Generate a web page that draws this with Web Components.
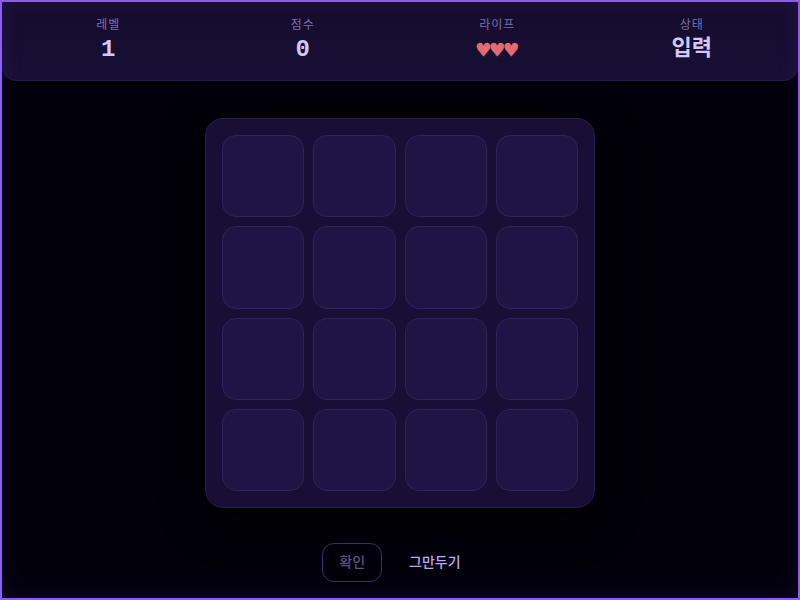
<!DOCTYPE html>
<html lang="ko">
<head>
<meta charset="utf-8">
<meta name="viewport" content="width=device-width, initial-scale=1">
<title>Memory Grid</title>
<style>
  html, body {
    margin: 0;
    min-height: 100%;
    background: #02010a;
  }
  body {
    font-family: "Liberation Sans", "Noto Sans CJK KR", sans-serif;
    color: #d4c8fa;
  }
</style>
</head>
<body>
<memory-game></memory-game>
<script>
class GameStat extends HTMLElement {
  constructor() {
    super();
    this.attachShadow({ mode: "open" }).innerHTML = `
      <style>
        :host {
          display: flex;
          flex-direction: column;
          align-items: center;
          gap: 2px;
        }
        .label {
          font-size: 12px;
          line-height: 16px;
          letter-spacing: 1px;
          color: #7d70ad;
        }
        .value {
          font: bold 22px/30px "Liberation Mono", "Noto Sans CJK KR", monospace;
          color: #d4c8fa;
        }
        :host([kind="number"]) .value {
          font-size: 24px;
        }
        :host([kind="lives"]) .value {
          font-family: "DejaVu Sans Mono", monospace;
          font-size: 23px;
          color: #e06c70;
        }
      </style>
      <span class="label">${this.getAttribute("label")}</span>
      <span class="value"><slot></slot></span>`;
  }
}
customElements.define("game-stat", GameStat);

class GameHud extends HTMLElement {
  constructor() {
    super();
    this.attachShadow({ mode: "open" }).innerHTML = `
      <style>
        :host {
          display: grid;
          grid-template-columns: repeat(4, 1fr);
          gap: 6px;
          padding: 15px 12px;
          background: linear-gradient(#140c2c, #190f36);
          border-bottom: 1px solid #251b47;
          border-radius: 0 0 14px 14px;
        }
      </style>
      <slot></slot>`;
  }
}
customElements.define("game-hud", GameHud);

class MemoryBoard extends HTMLElement {
  constructor() {
    super();
    const size = Number(this.getAttribute("size")) || 4;
    let cells = "";
    for (let i = 1; i <= size * size; i++)
      cells += `<button type="button" aria-label="${i}"></button>`;
    this.attachShadow({ mode: "open" }).innerHTML = `
      <style>
        :host {
          box-sizing: border-box;
          display: grid;
          grid-template-columns: repeat(${size}, 1fr);
          gap: 9px;
          width: min(100%, 390px);
          padding: 16px;
          background: #190f36;
          border: 1px solid #271c4c;
          border-radius: 18px;
          box-shadow: 0 10px 40px #000;
        }
        button {
          aspect-ratio: 1;
          padding: 0;
          background: #1e1544;
          border: 1px solid #2e235a;
          border-radius: 14px;
          cursor: pointer;
        }
      </style>
      ${cells}`;
  }
}
customElements.define("memory-board", MemoryBoard);

class GameButton extends HTMLElement {
  constructor() {
    super();
    const disabled = this.hasAttribute("disabled") ? "disabled" : "";
    this.attachShadow({ mode: "open" }).innerHTML = `
      <style>
        :host {
          display: block;
        }
        button {
          padding: 8px 16px;
          font: 500 14px/21px "Liberation Sans", "Noto Sans CJK KR", sans-serif;
          color: #b9a9ee;
          background: transparent;
          border: 1px solid transparent;
          border-radius: 12px;
          cursor: pointer;
        }
        button:disabled {
          color: #5b5180;
          border-color: #3a2f70;
          cursor: default;
        }
      </style>
      <button type="button" ${disabled}><slot></slot></button>`;
  }
}
customElements.define("game-button", GameButton);

class MemoryGame extends HTMLElement {
  constructor() {
    super();
    this.attachShadow({ mode: "open" }).innerHTML = `
      <style>
        :host {
          box-sizing: border-box;
          position: relative;
          display: flex;
          flex-direction: column;
          min-height: 100vh;
          border: 2px solid #8b5cf6;
        }
        /* soft glow along the frame, above the content */
        :host::after {
          content: "";
          position: absolute;
          inset: 0;
          box-shadow: inset 0 0 24px rgba(139, 92, 246, 0.1);
          pointer-events: none;
        }
        main {
          flex: 1;
          display: flex;
          align-items: center;
          justify-content: center;
          padding: 18px 16px 16px;
        }
        footer {
          display: flex;
          justify-content: center;
          gap: 10px;
          padding: 0 16px 16px;
        }
      </style>
      <game-hud>
        <game-stat label="레벨" kind="number">1</game-stat>
        <game-stat label="점수" kind="number">0</game-stat>
        <game-stat label="라이프" kind="lives">♥♥♥</game-stat>
        <game-stat label="상태">입력</game-stat>
      </game-hud>
      <main><memory-board size="4"></memory-board></main>
      <footer>
        <game-button disabled>확인</game-button>
        <game-button>그만두기</game-button>
      </footer>`;
  }
}
customElements.define("memory-game", MemoryGame);
</script>
</body>
</html>
